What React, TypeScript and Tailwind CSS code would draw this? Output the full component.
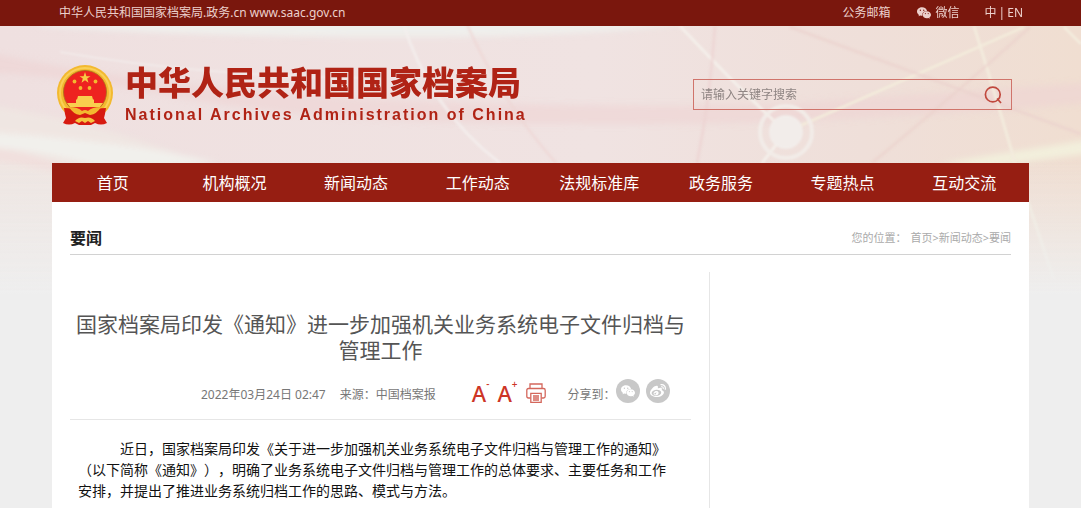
import { type FormEvent, type ReactNode, useState } from 'react';
import { AiFillWechat } from 'react-icons/ai';
import { FaWeibo } from 'react-icons/fa';

interface CircleButtonProps {
  label: string;
  children: ReactNode;
}

const navItems = [
  '首页',
  '机构概况',
  '新闻动态',
  '工作动态',
  '法规标准库',
  '政务服务',
  '专题热点',
  '互动交流',
];

const crumbs = ['首页', '新闻动态', '要闻'];

// Soft ribbons, rays and the glowing node behind the header
function Backdrop() {
  return (
    <svg
      className="absolute inset-x-0 top-0 -z-10 h-80 w-full"
      viewBox="0 0 1081 320"
      preserveAspectRatio="none"
      aria-hidden="true"
    >
      <defs>
        <linearGradient id="base" x1="0" x2="1" y1="0" y2="0">
          <stop offset="0" stopColor="#efe0e0" />
          <stop offset="0.55" stopColor="#f0e3e2" />
          <stop offset="0.8" stopColor="#efdfd9" />
          <stop offset="1" stopColor="#f0ded1" />
        </linearGradient>
        <linearGradient id="fade" x1="0" x2="0" y1="0" y2="1">
          <stop offset="0.5" stopColor="#eeeeee" stopOpacity="0" />
          <stop offset="0.92" stopColor="#eeeeee" />
        </linearGradient>
        <filter id="soft" x="-10%" y="-50%" width="120%" height="200%">
          <feGaussianBlur stdDeviation="3" />
        </filter>
        <filter id="thin" x="-10%" y="-10%" width="120%" height="120%">
          <feGaussianBlur stdDeviation="1" />
        </filter>
      </defs>
      <rect width="1081" height="320" fill="url(#base)" />
      <g filter="url(#soft)">
        <path d="M40 20 H720 Q600 36 440 37 Q200 38 40 26Z" fill="#efefec" />
        <path d="M-20 50 Q90 76 270 92 Q460 108 760 105 L1100 82 V102 Q800 128 560 124 Q300 124 150 92 Q60 76 -20 72Z" fill="#eed3d3" opacity="0.6" />
        <path d="M-20 104 Q100 120 200 163 L300 320 H-20Z" fill="#f0e8e3" opacity="0.7" />
        <path d="M-20 132 Q120 140 220 163 L100 166 Q40 150 -20 146Z" fill="#f1f0ec" />
        <path d="M-20 146 Q50 154 100 184 Q40 166 -20 158Z" fill="#f1dfdd" />
        <path d="M940 163 L1100 138 V152 L980 168Z" fill="#f2efdc" />
      </g>
      <g filter="url(#thin)" fill="none">
        <path d="M60 52 Q200 76 360 78" stroke="#f3eeec" strokeWidth="2" opacity="0.7" />
        <path d="M402 20 Q430 110 500 163" stroke="#f4efed" strokeWidth="3" opacity="0.8" />
        <path d="M465 20 Q500 100 556 163" stroke="#eed6d4" strokeWidth="3" opacity="0.6" />
        <path d="M680 26 Q740 90 786 132 M786 132 L762 163" stroke="#f4efea" strokeWidth="3" />
        <path d="M715 26 Q710 100 697 163" stroke="#ecd3d1" strokeWidth="3" opacity="0.7" />
        <path d="M786 132 L1024 27" stroke="#f3ebdb" strokeWidth="3" />
        <path d="M974 26 Q1000 110 1015 163 L1054 280" stroke="#f3ebdd" strokeWidth="3" />
        <path d="M790 27 L1081 134" stroke="#ebd0cd" strokeWidth="3" opacity="0.6" />
        <path d="M1030 27 Q960 90 872 163" stroke="#ebd0cb" strokeWidth="3" opacity="0.6" />
        <path d="M1064 27 L1081 44" stroke="#f3ebdd" strokeWidth="3" />
      </g>
      <g filter="url(#thin)">
        <circle cx="786" cy="132" r="26" fill="none" stroke="#f2ece8" strokeWidth="4" />
        <circle cx="786" cy="132" r="17" fill="#f2edea" />
      </g>
      <rect width="1081" height="320" fill="url(#fade)" />
    </svg>
  );
}

function Emblem() {
  return (
    <svg className="h-[60px] w-14 shrink-0" viewBox="0 0 56 60" aria-hidden="true">
      <circle cx="28" cy="28" r="28" fill="#f3b92f" />
      <circle cx="28" cy="28" r="25" fill="none" stroke="#f9d057" strokeWidth="2" />
      <circle cx="28" cy="27" r="21.5" fill="#ee2320" stroke="#a8701b" strokeWidth="0.8" />
      <path d="M7 43 Q17 43 22 48 Q28 46 34 48 Q39 43 49 43 L48 49 L47 53 L50 58 Q44 61 38 58 L34 60 H22 L18 58 Q12 61 6 58 L9 53 L8 49Z" fill="#d71a10" />
      <path d="M28 7 L29.4 11.200 H33.500 L30.2 13.600 L31.5 17.800 L28 15.200 L24.500 17.800 L25.8 13.600 L22.500 11.200 H26.6Z" fill="#f7cb45" />
      <g fill="#f3b92f">
        <circle cx="17.500" cy="16.500" r="1.900" />
        <circle cx="38.500" cy="16.500" r="1.900" />
        <circle cx="23.500" cy="23" r="1.900" />
        <circle cx="32.500" cy="23" r="1.900" />
      </g>
      <path d="M21 31 H35 L36 34.500 H20Z M19 34.500 H37 V38 H19Z M10 38 H46 L43 42 H13Z" fill="#f9cf4e" />
      <path d="M12 42 Q21 42 25 46 Q28 44 31 46 Q35 42 44 42 Q40 49 33 50 L28 48 L23 50 Q16 49 12 42Z" fill="#f3b92f" />
      <path d="M18 56 Q22 51 28 53 Q34 51 38 56 L34 58 L31 56 L28 58 L25 56 L22 58Z" fill="#f6c440" />
    </svg>
  );
}

function SearchBox() {
  const [keyword, setKeyword] = useState('');

  function handleSubmit(e: FormEvent) {
    e.preventDefault();
  }

  return (
    <form
      onSubmit={handleSubmit}
      className="flex h-[31px] w-[319px] items-center border border-[#d0746b]"
    >
      <input
        type="search"
        aria-label="请输入关键字搜索"
        placeholder="请输入关键字搜索"
        value={keyword}
        onChange={(e) => setKeyword(e.target.value)}
        className="min-w-0 flex-1 bg-transparent pl-[7px] text-xs text-[#555] outline-none placeholder:text-[#8f8583]"
      />
      <button type="submit" aria-label="搜索" className="px-2">
        <svg className="h-5 w-5" viewBox="0 0 20 20" fill="none" stroke="#c0483d" strokeWidth="1.7">
          <circle cx="9.800" cy="9.500" r="7.400" />
          <path d="M14 13.500 L18 18" />
        </svg>
      </button>
    </form>
  );
}

function PrinterIcon() {
  return (
    <svg className="h-5 w-5" viewBox="0 0 20 20" fill="none" stroke="#d4675c" strokeWidth="1.3">
      <path d="M4 5.500 V1 H16 V5.500" />
      <path d="M4.500 15 H2.500 Q0.800 15 0.800 13.300 V7.200 Q0.800 5.500 2.500 5.500 H17.500 Q19.200 5.500 19.200 7.200 V13.300 Q19.200 15 17.500 15 H15.500" />
      <path d="M4.800 10.300 H15.200 V19.300 H4.800Z M7 13 H13 M7 15 H13 M7 17 H13" />
    </svg>
  );
}

function CircleButton({ label, children }: CircleButtonProps) {
  return (
    <button
      type="button"
      aria-label={label}
      className="flex size-6 items-center justify-center rounded-full bg-[#c8c8c8] text-white"
    >
      {children}
    </button>
  );
}

export default function App() {
  return (
    <div className="relative isolate flex min-h-screen flex-col bg-[#eeeeee] font-['Noto_Sans','Noto_Sans_CJK_SC',sans-serif]">
      <Backdrop />

      <div className="flex h-[26px] items-center justify-between bg-[#7a170d] pr-[58px] pl-[59px] text-xs text-[#ecd0cc]">
        <span>中华人民共和国国家档案局.政务.cn www.saac.gov.cn</span>
        <div className="flex items-center gap-[25px]">
          <a href="#mail">公务邮箱</a>
          <a href="#wechat" className="flex items-center gap-1">
            <AiFillWechat className="size-4" />
            微信
          </a>
          <span className="flex gap-0.5">
            <a href="#zh">中</a>
            <span>|</span>
            <a href="#en">EN</a>
          </span>
        </div>
      </div>

      <header className="flex h-[137px] items-center justify-between pr-[69px] pl-[57px]">
        <div className="flex items-center gap-3 text-[#b02315]">
          <Emblem />
          <div>
            <h1 className="text-[33px] leading-10 font-black">中华人民共和国国家档案局</h1>
            <p className="font-['Liberation_Sans',Arial,sans-serif] text-base leading-6 font-bold tracking-[2px]">
              National Archives Administration of China
            </p>
          </div>
        </div>
        <SearchBox />
      </header>

      <div className="flex flex-1 flex-col px-13">
        <nav className="grid h-[39px] grid-cols-8 items-center bg-[#961e12] pr-1 text-center text-base text-white">
          {navItems.map((item) => (
            <a key={item} href="#nav">
              {item}
            </a>
          ))}
        </nav>

        <main className="flex flex-1 flex-col bg-white px-[18px] pt-5">
          <div className="flex h-[33px] items-center justify-between border-b border-[#d2d2d2]">
            <h2 className="text-base font-bold text-[#222]">要闻</h2>
            <div className="flex gap-1 text-[11px] text-[#aaa]">
              <span>您的位置：</span>
              <span>
                {crumbs.map((crumb, i) => (
                  <span key={crumb}>
                    {i > 0 && '>'}
                    <a href="#crumb">{crumb}</a>
                  </span>
                ))}
              </span>
            </div>
          </div>

          <div className="mt-[17px] flex flex-1">
            <article className="w-[640px] border-r border-[#e6e6e6] pt-[39px] pr-[18px]">
              <h3 className="text-center text-[21px] leading-[26px] text-[#555] [text-spacing-trim:space-all]">
                国家档案局印发《通知》进一步加强机关业务系统电子文件归档与管理工作
              </h3>
              <div className="mt-4 flex items-end border-b border-[#e6e6e6] pb-4 pl-[131px] text-xs leading-4 text-[#777]">
                <time dateTime="2022-03-24T02:47">2022年03月24日 02:47</time>
                <span className="ml-[14px]">来源：</span>
                <span>中国档案报</span>
                <div className="ml-9 flex items-center gap-2 text-[#cd3526]">
                  <button type="button" aria-label="缩小字号" className="flex text-[22px] leading-5 font-medium">
                    A<sup className="text-[10px] leading-3">-</sup>
                  </button>
                  <button type="button" aria-label="放大字号" className="flex text-[22px] leading-5 font-medium">
                    A<sup className="text-[10px] leading-3">+</sup>
                  </button>
                  <button type="button" aria-label="打印">
                    <PrinterIcon />
                  </button>
                </div>
                <span className="ml-[22px]">分享到：</span>
                <div className="flex gap-1.5 self-center">
                  <CircleButton label="分享到微信">
                    <AiFillWechat className="size-4" />
                  </CircleButton>
                  <CircleButton label="分享到微博">
                    <FaWeibo className="size-4" />
                  </CircleButton>
                </div>
              </div>
              <p className="mt-[18px] mr-3 ml-2 indent-[42px] text-sm leading-[21px] text-[#111] [text-spacing-trim:space-all]">
                近日，国家档案局印发《关于进一步加强机关业务系统电子文件归档与管理工作的通知》（以下简称《通知》），明确了业务系统电子文件归档与管理工作的总体要求、主要任务和工作安排，并提出了推进业务系统归档工作的思路、模式与方法。
              </p>
            </article>
          </div>
        </main>
      </div>
    </div>
  );
}
